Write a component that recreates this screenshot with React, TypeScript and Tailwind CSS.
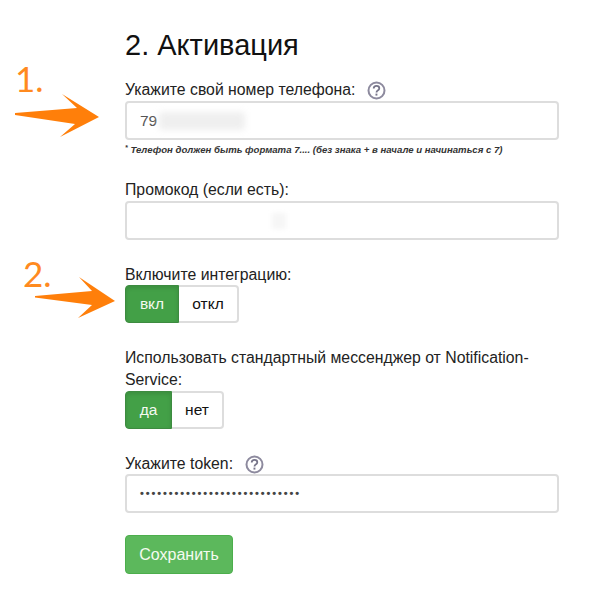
import React from "react";

function Help() {
  return (
    <svg width="19" height="19" viewBox="0 0 19 19" className="ml-[12px] mt-[2px] shrink-0">
      <circle cx="9.5" cy="9.5" r="8" fill="white" stroke="#8d8a9e" strokeWidth="2" />
      <path d="M6.7 7.4c0-1.7 1.2-2.6 2.8-2.6s2.8 1 2.8 2.4c0 1.2-.7 1.8-1.6 2.4-.8.5-1.2.9-1.2 1.9" fill="none" stroke="#77758a" strokeWidth="1.8" />
      <rect x="8.5" y="12.6" width="1.9" height="2" fill="#77758a" />
    </svg>
  );
}

function Arrow({ className, width, height, d }: { className: string; width: number; height: number; d: string }) {
  return (
    <svg width={width} height={height} viewBox={`0 0 ${width} ${height}`} className={className}>
      <path d={d} fill="#ff7f0a" />
    </svg>
  );
}

function Toggle({ on, off, onW, offW }: { on: string; off: string; onW: string; offW: string }) {
  return (
    <div className="flex h-[38px] w-fit text-[15.5px]">
      <div className={`flex items-center justify-center rounded-l-[4px] border border-[#3d8b40] bg-[#43a047] text-[#f4f9f0] shadow-[inset_0_2px_4px_rgba(0,0,0,0.12)] ${onW}`}>
        {on}
      </div>
      <div className={`flex items-center justify-center rounded-r-[4px] border-2 border-l-0 border-[#dddddd] bg-white text-[#111111] ${offW}`}>
        {off}
      </div>
    </div>
  );
}

const inputClass = "h-[39px] w-[434px] rounded-[4px] border-2 border-[#dddddd] bg-white flex items-center pl-[13px] text-[15.5px] text-[#555555]";

export default function App() {
  return (
    <div className="relative h-[606px] w-[600px] overflow-hidden bg-white pl-[125px] pt-[27px] text-[#222222] [font-family:'Liberation_Sans',Arial,sans-serif]">
      <h1 className="h-[36px] text-[29px] leading-[36px] text-[#111111]">2. Активация</h1>

      <div className="mt-[15px] flex h-[23px] items-center text-[15.8px]">
        Укажите свой номер телефона:
        <Help />
      </div>
      <div className={inputClass}>
        <span>79</span>
        <span className="ml-[2px] h-[18px] w-[86px] rounded-[3px] bg-[#efefef] blur-[3px]" />
      </div>
      <p className="mt-[3px] h-[14px] whitespace-nowrap text-[9.6px] italic font-bold leading-[14px] text-[#333333]">
        <sup className="text-[7px]">*</sup> Телефон должен быть формата 7.... (без знака + в начале и начинаться с 7)
      </p>

      <div className="mt-[21px] flex h-[23px] items-center text-[15.8px]">Промокод (если есть):</div>
      <div className={inputClass}>
        <span className="ml-[132px] h-[16px] w-[14px] bg-[#f6f6f6] blur-[2px]" />
      </div>

      <div className="mt-[24px] flex h-[21px] items-center text-[15.8px]">Включите интеграцию:</div>
      <Toggle on="вкл" off="откл" onW="w-[54px]" offW="w-[60px]" />

      <div className="mt-[24px] w-[433px] text-[15.8px] leading-[22px]">
        Использовать стандартный мессенджер от Notification-Service:
      </div>
      <Toggle on="да" off="нет" onW="w-[47px]" offW="w-[52px]" />

      <div className="mt-[24px] flex h-[21px] items-center text-[15.8px]">
        Укажите token:
        <Help />
      </div>
      <div className={inputClass}>
        <span className="text-[11px] font-bold tracking-[1.9px] text-[#444444]">••••••••••••••••••••••••••••</span>
      </div>

      <button className="mt-[22px] h-[39px] w-[108px] rounded-[4px] border border-[#4cae4c] bg-[#5cb85c] text-[16px] text-[#f4fbf0]">
        Сохранить
      </button>

      <span className="absolute left-[15px] top-[60px] text-[35px] leading-[36px] text-[#ff8a1f] [font-family:Lato,sans-serif] font-normal">1.</span>
      <Arrow className="absolute left-[15px] top-[94px]" width={85} height={44} d="M0 19 L62 14 L47 0 L84 23 L45 43 L60 30 L0 21 Z" />
      <span className="absolute left-[23px] top-[255px] text-[35px] leading-[36px] text-[#ff8a1f] [font-family:Lato,sans-serif] font-normal">2.</span>
      <Arrow className="absolute left-[35px] top-[277px]" width={81} height={42} d="M0 19 L57 14 L44 0 L80 24 L43 41 L57 28 L0 20.5 Z" />
    </div>
  );
}
